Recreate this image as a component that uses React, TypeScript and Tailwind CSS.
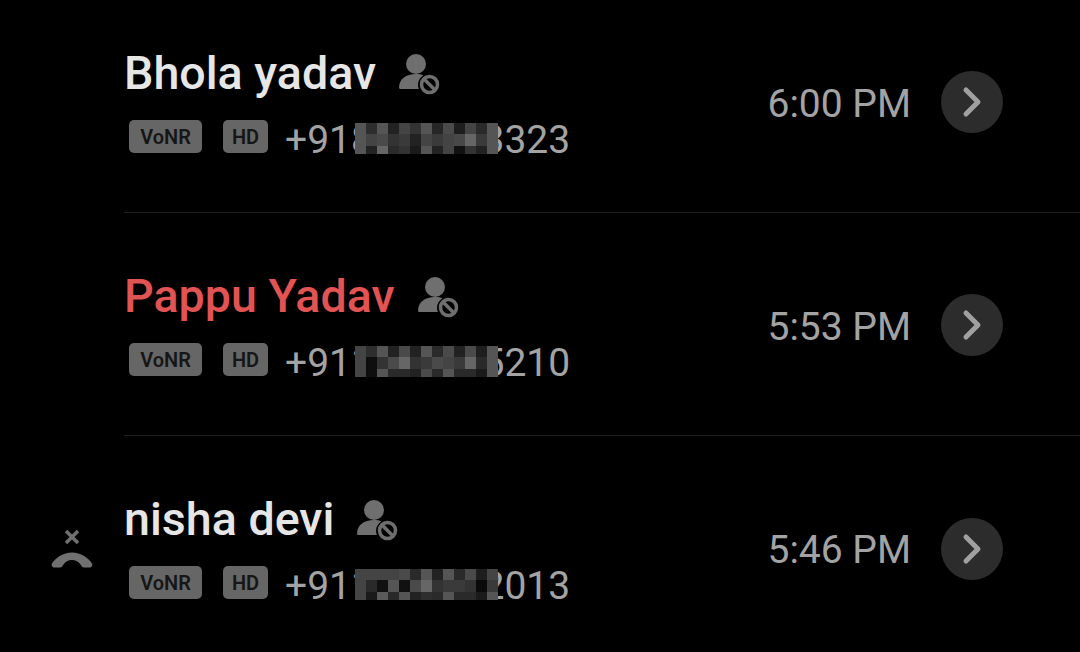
const mosaics = [
  [
    ["#555","#2e2e2e","#555","#222","#444","#333","#555","#262626","#4a4a4a","#1e1e1e","#444","#2a2a2a","#555"],
    ["#555","#444","#4a4a4a","#333","#3a3a3a","#222","#444","#3a3a3a","#444","#484848","#666","#3a3a3a","#555"],
    ["#555","#222","#666","#2a2a2a","#333","#1a1a1a","#555","#222","#444","#111","#333","#222","#555"],
  ],
  [
    ["#444","#2e2e2e","#555","#222","#4a4a4a","#222","#555","#2a2a2a","#4a4a4a","#222","#4a4a4a","#1e1e1e","#555"],
    ["#444","#0e0e0e","#333","#4a4a4a","#666","#333","#3a3a3a","#4a4a4a","#444","#3a3a3a","#666","#2a2a2a","#555"],
    ["#444","#0e0e0e","#555","#2a2a2a","#2a2a2a","#222","#4a4a4a","#2a2a2a","#555","#2a2a2a","#2a2a2a","#1a1a1a","#555"],
  ],
  [
    ["#444","#444","#444","#444","#4a4a4a","#2a2a2a","#555","#222","#555","#2a2a2a","#4a4a4a","#1e1e1e","#444"],
    ["#444","#2a2a2a","#111","#555","#111","#4a4a4a","#666","#333","#3a3a3a","#3a3a3a","#333","#0a0a0a","#3a3a3a"],
    ["#444","#1a1a1a","#5a5a5a","#2a2a2a","#555","#222","#2e2e2e","#2a2a2a","#555","#2a2a2a","#2a2a2a","#1a1a1a","#555"],
  ],
];

const rows = [
  { name: "Bhola yadav", time: "6:00 PM", phone: "+918000003323", missed: false, rejected: false },
  { name: "Pappu Yadav", time: "5:53 PM", phone: "+911000005210", missed: true, rejected: false },
  { name: "nisha devi", time: "5:46 PM", phone: "+911000002013", missed: false, rejected: true },
];

function ContactBlocked() {
  return (
    <svg width="42" height="42" viewBox="0 0 42 42" className="ml-[23px] mt-[1px] shrink-0">
      <circle cx="17" cy="11" r="10" fill="#6f6f6f" />
      <path d="M0 35c0-9 7-14 17-14 3 0 5.500.4 7.500 1.200C21 24.500 19 28 19 31.500c0 1.500.3 3 .9 4.500H2c-1.300 0-2-.5-2-1z" fill="#6f6f6f" />
      <circle cx="30.500" cy="31.500" r="8" fill="none" stroke="#6f6f6f" strokeWidth="3.500" />
      <path d="M25.500 26.500l10 10" stroke="#6f6f6f" strokeWidth="3.500" />
    </svg>
  );
}

function HangUp() {
  return (
    <svg width="42" height="40" viewBox="0 0 42 40" className="text-[#707070]">
      <path d="M15 3l12 12M27 3L15 15" stroke="currentColor" strokeWidth="3.500" fill="none" />
      <path
        d="M21 24.500C30 24.500 37 29.500 41 35.500C42 37.500 40.500 39.500 38.500 39.500H33C31 39.500 30.500 38 29.500 36.500C27.500 33.500 24.500 32 21 32C17.500 32 14.500 33.500 12.500 36.500C11.500 38 11 39.500 9 39.500H3.500C1.500 39.500 0 37.500 1 35.500C5 29.500 12 24.500 21 24.500Z"
        fill="currentColor"
      />
    </svg>
  );
}

function Badge({ label, width }: { label: string; width: string }) {
  return (
    <span className={`flex h-[33px] ${width} items-center justify-center rounded-[5px] bg-[#666666] text-[20px] font-semibold text-[#161616]`}>
      {label}
    </span>
  );
}

export default function App() {
  return (
    <div className="h-[652px] w-[1080px] overflow-hidden bg-black font-['Roboto',sans-serif]">
      <div className="-mt-[10px] flex flex-col">
        {rows.map((row, r) => (
          <div key={row.name} className="flex h-[223px] items-stretch">
            <div className="flex w-[124px] shrink-0 items-center pl-[51px]">
              {row.rejected && <HangUp />}
            </div>
            <div className={`flex flex-1 items-center pr-[77px] ${r < 2 ? "border-b border-[#1f1f1f]" : ""}`}>
              <div className="flex flex-1 flex-col self-start pt-[53px]">
                <div className="flex items-center">
                  <span className={`text-[46.600px] font-medium leading-[60px] ${row.missed ? "text-[#e25353]" : "text-[#e6e6e6]"}`}>
                    {row.name}
                  </span>
                  <ContactBlocked />
                </div>
                <div className="mt-[6px] flex items-center">
                  <span className="ml-[5px]"><Badge label="VoNR" width="w-[73px]" /></span>
                  <span className="ml-[21px]"><Badge label="HD" width="w-[45px]" /></span>
                  <div className="ml-[17px] pt-[7px]">
                    <span className="relative block text-[39px] leading-[48px] text-[#a3a3a3]">
                      {row.phone}
                      <span className="absolute left-[70px] top-[7px] grid grid-cols-[repeat(13,11px)] grid-rows-[11px_12px_8px]">
                        {mosaics[r].flat().map((c, i) => (
                          <span key={i} style={{ backgroundColor: c }} />
                        ))}
                      </span>
                    </span>
                  </div>
                </div>
              </div>
              <span className="mr-[30px] pt-[6px] text-[39px] text-[#a3a3a3]">{row.time}</span>
              <button className="mt-[2px] flex h-[62px] w-[62px] items-center justify-center rounded-full bg-[#2c2c2c]">
                <svg width="24" height="32" viewBox="0 0 24 32">
                  <path d="M6 4l12 12L6 28" fill="none" stroke="#a0a0a0" strokeWidth="5" strokeLinecap="round" strokeLinejoin="round" />
                </svg>
              </button>
            </div>
          </div>
        ))}
      </div>
    </div>
  );
}
